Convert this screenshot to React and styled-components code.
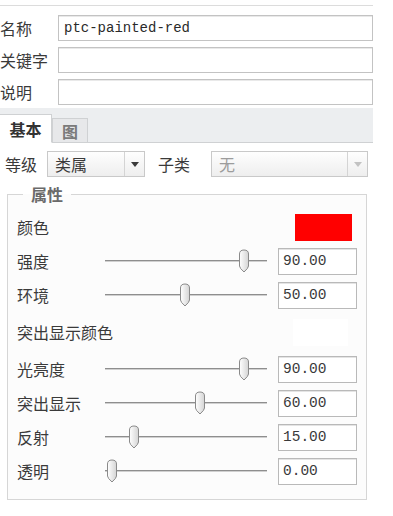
import React from 'react';
import styled, { createGlobalStyle } from 'styled-components';

const GlobalStyle = createGlobalStyle`
  html, body {
    margin: 0;
    padding: 0;
    background: #ffffff;
  }
  body {
    font-family: "Noto Sans CJK SC", "Noto Sans", sans-serif;
    color: #3a3a3a;
  }
`;

const Panel = styled.div`
  width: 373px;
  background: #ffffff;
  overflow: hidden;
`;

const TopEdge = styled.div`
  height: 5px;
  border-bottom: 1px solid #dcdcdc;
`;

const Fields = styled.div`
  display: flex;
  flex-direction: column;
  gap: 6px;
  padding-top: 9px;
`;

const FieldRow = styled.div`
  display: flex;
  align-items: center;
  height: 26px;
`;

const FieldLabel = styled.span`
  width: 58px;
  flex: none;
  font-size: 16px;
  line-height: 20px;
  white-space: nowrap;
  color: #3a3a3a;
`;

const TextInput = styled.div`
  flex: 1;
  height: 26px;
  box-sizing: border-box;
  border: 1px solid #c3c3c3;
  box-shadow: inset 0 1px 0 #e9e9e9;
  background: #ffffff;
  padding-left: 5px;
  display: flex;
  align-items: center;
  font-family: "Liberation Mono", "Noto Sans CJK SC", monospace;
  font-size: 14px;
  color: #2a2a2a;
`;

const TabBar = styled.div`
  margin-top: 3px;
  height: 34px;
  background: #eceef0;
  border-bottom: 1px solid #cfd1d3;
  display: flex;
  align-items: flex-end;
`;

const Tab = styled.div`
  box-sizing: border-box;
  height: ${(p) => (p.$active ? 29 : 25)}px;
  width: ${(p) => p.$w}px;
  margin-bottom: -1px;
  border: 1px solid #cfd1d3;
  border-left: ${(p) => (p.$active ? 'none' : '1px solid #cfd1d3')};
  border-bottom: ${(p) => (p.$active ? '1px solid #ffffff' : '1px solid #cfd1d3')};
  background: ${(p) => (p.$active ? '#ffffff' : '#e7e8ea')};
  color: ${(p) => (p.$active ? '#333333' : '#7a7a7a')};
  font-size: 16px;
  font-weight: bold;
  display: flex;
  align-items: center;
  justify-content: center;
`;

const ClassRow = styled.div`
  margin-top: 8px;
  display: flex;
  align-items: center;
  height: 26px;
  padding-left: 5px;
`;

const RowLabel = styled.span`
  width: ${(p) => p.$w}px;
  margin-left: ${(p) => p.$ml || 0}px;
  flex: none;
  font-size: 16px;
  line-height: 20px;
  white-space: nowrap;
  color: #3a3a3a;
`;

const Select = styled.div`
  width: ${(p) => p.$w}px;
  height: 26px;
  box-sizing: border-box;
  border: 1px solid #c9c9c9;
  background: linear-gradient(#fefefe, #eeeeee);
  display: flex;
  align-items: center;
  flex: none;
`;

const SelectValue = styled.span`
  flex: 1;
  padding-left: 7px;
  font-size: 16px;
  line-height: 20px;
  color: ${(p) => (p.$disabled ? '#9c9c9c' : '#3a3a3a')};
`;

const SelectArrow = styled.span`
  width: 19px;
  height: 24px;
  border-left: 1px solid #d4d4d4;
  display: flex;
  align-items: center;
  justify-content: center;
  &::after {
    content: '';
    border-left: 4px solid transparent;
    border-right: 4px solid transparent;
    border-top: 5px solid ${(p) => (p.$disabled ? '#c2c2c2' : '#3a3a3a')};
  }
`;

const Group = styled.fieldset`
  margin: 7px 0 0 7px;
  width: 360px;
  box-sizing: border-box;
  min-width: 0;
  padding: 6px 0 11px 9px;
  border: 1px solid #d6d6d6;
  background: #fcfcfc;
`;

const Legend = styled.legend`
  margin-left: 6px;
  padding: 0 8px;
  font-size: 16px;
  line-height: 20px;
  font-weight: bold;
  color: #6a6a6a;
`;

const PropRow = styled.div`
  display: flex;
  align-items: center;
  height: ${(p) => p.$h || 34}px;
`;

const PropLabel = styled.span`
  width: 88px;
  flex: none;
  font-size: 16px;
  line-height: 20px;
  white-space: nowrap;
  color: #3a3a3a;
`;

const Swatch = styled.div`
  margin-left: auto;
  margin-right: ${(p) => p.$mr}px;
  width: ${(p) => p.$w}px;
  height: 27px;
  background: ${(p) => p.$color};
`;

const SliderBox = styled.div`
  position: relative;
  width: 162px;
  height: 24px;
  flex: none;
`;

const Track = styled.div`
  position: absolute;
  left: 0;
  right: 0;
  top: 11px;
  height: 1px;
  background: #8e8e8e;
  box-shadow: 0 1px 0 #d0d0d0;
`;

const Thumb = styled.svg`
  position: absolute;
  top: 0;
  width: 12px;
  height: 24px;
`;

const NumberBox = styled.div`
  margin-left: 11px;
  width: 79px;
  height: 27px;
  box-sizing: border-box;
  border: 1px solid #b9b9b9;
  box-shadow: inset 0 1px 0 #e4e4e4;
  background: #ffffff;
  padding-left: 4px;
  display: flex;
  align-items: center;
  font-family: "Liberation Mono", monospace;
  font-size: 14.5px;
  color: #3a3a3a;
`;

const Slider = ({ value }) => (
  <SliderBox>
    <Track />
    <Thumb viewBox="0 0 12 24" style={{ left: 1 + value * 1.467 }}>
      <defs>
        <linearGradient id="thumbFill" x1="0" x2="1" y1="0" y2="0">
          <stop offset="0" stopColor="#ffffff" />
          <stop offset="1" stopColor="#d4d4d4" />
        </linearGradient>
      </defs>
      <path
        d="M1.5 5 Q1.5 1 6 1 Q10.5 1 10.5 5 L10.5 17 Q10.5 19 6 23 Q1.5 19 1.5 17 Z"
        fill="url(#thumbFill)"
        stroke="#8a8a8a"
        strokeWidth="1"
      />
    </Thumb>
  </SliderBox>
);

const props = [
  { type: 'swatch', label: '颜色', color: '#ff0000', w: 57, mr: 14 },
  { type: 'slider', label: '强度', value: 90 },
  { type: 'slider', label: '环境', value: 50 },
  { type: 'swatch', label: '突出显示颜色', color: '#ffffff', w: 55, mr: 18, h: 40 },
  { type: 'slider', label: '光亮度', value: 90 },
  { type: 'slider', label: '突出显示', value: 60 },
  { type: 'slider', label: '反射', value: 15 },
  { type: 'slider', label: '透明', value: 0 },
];

const App = () => (
  <>
    <GlobalStyle />
    <Panel>
      <TopEdge />
      <Fields>
        <FieldRow>
          <FieldLabel>名称</FieldLabel>
          <TextInput>ptc-painted-red</TextInput>
        </FieldRow>
        <FieldRow>
          <FieldLabel>关键字</FieldLabel>
          <TextInput />
        </FieldRow>
        <FieldRow>
          <FieldLabel>说明</FieldLabel>
          <TextInput />
        </FieldRow>
      </Fields>

      <TabBar>
        <Tab $active $w={52}>基本</Tab>
        <Tab $w={36}>图</Tab>
      </TabBar>

      <ClassRow>
        <RowLabel $w={42}>等级</RowLabel>
        <Select $w={98}>
          <SelectValue>类属</SelectValue>
          <SelectArrow />
        </Select>
        <RowLabel $w={53} $ml={13}>子类</RowLabel>
        <Select $w={157}>
          <SelectValue $disabled>无</SelectValue>
          <SelectArrow $disabled />
        </Select>
      </ClassRow>

      <Group>
        <Legend>属性</Legend>
        {props.map((p) => (
          <PropRow key={p.label} $h={p.h}>
            <PropLabel>{p.label}</PropLabel>
            {p.type === 'swatch' ? (
              <Swatch $color={p.color} $w={p.w} $mr={p.mr} />
            ) : (
              <>
                <Slider value={p.value} />
                <NumberBox>{p.value.toFixed(2)}</NumberBox>
              </>
            )}
          </PropRow>
        ))}
      </Group>
    </Panel>
  </>
);

export default App;
